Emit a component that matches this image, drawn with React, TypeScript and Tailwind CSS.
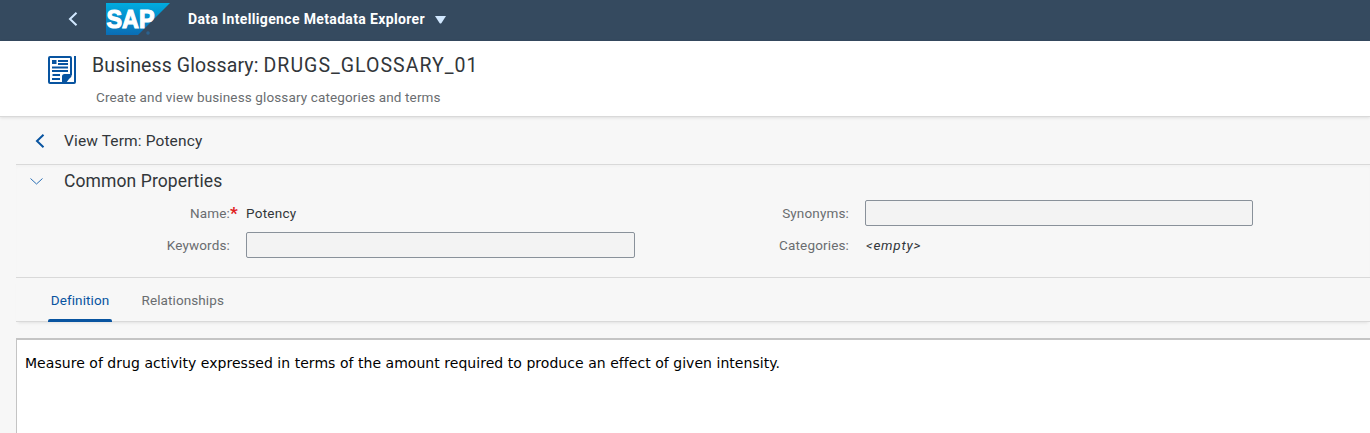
import React from "react";

function BackIcon({ className }: { className: string }) {
  return (
    <svg className={className} width="10" height="14" viewBox="0 0 10 14" fill="none" stroke="currentColor" strokeWidth="2">
      <path d="M8.5 .8 2 7l6.5 6.2" />
    </svg>
  );
}

function SapLogo() {
  return (
    <svg className="ml-[26px] shrink-0" width="64" height="32" viewBox="0 0 64 32">
      <defs>
        <linearGradient id="logo" x1="0" y1="0" x2="0" y2="1">
          <stop offset="0" stopColor="#00ace0" />
          <stop offset="1" stopColor="#0a6db5" />
        </linearGradient>
      </defs>
      <path d="M0 0h64L32 32H0z" fill="url(#logo)" />
      <text x="0.5" y="25" fontFamily="Liberation Sans, sans-serif" fontWeight="700" fontSize="26.5" textLength="48" lengthAdjust="spacingAndGlyphs" fill="#fff" stroke="#fff" strokeWidth="1.2">SAP</text>
      <circle cx="42" cy="30" r="1.8" fill="#2b628f" />
    </svg>
  );
}

function GlossaryIcon() {
  return (
    <svg className="ml-12 mt-[15px] shrink-0" width="28" height="28" viewBox="0 0 28 28" fill="none" stroke="#0854a0" strokeWidth="2">
      <path d="M23 19V2q0-1-1-1H2Q1 1 1 2v24q0 1 1 1h24q1 0 1-1V0" />
      <path d="M10 5h10M10 8h10M4 11.5h16M4 15h16M4.500 19h7.500M4 23h8" strokeWidth="1.800" />
      <path d="M4 4h4.500v4H4z" fill="#0854a0" stroke="none" />
      <path d="M14 27v-6.500q0-2.500 2.500-2.500H24q0 3-3 5l-3 4z" fill="#0854a0" stroke="none" />
    </svg>
  );
}

export default function App() {
  return (
    <div className="flex h-[433px] w-[1370px] flex-col overflow-hidden bg-[#f7f7f7] font-['Roboto',sans-serif] text-[#32363a]">
      <header className="flex h-[41px] shrink-0 items-center bg-[#354a5f] pl-[68px] pb-[3px] text-[#d1e8ff]">
        <BackIcon className="mr-[2px] shrink-0" />
        <SapLogo />
        <span className="ml-[18px] whitespace-nowrap text-[14px] font-bold tracking-[0.35px] text-white">Data Intelligence Metadata Explorer</span>
        <svg className="ml-[10px] mt-[2px]" width="11" height="8" viewBox="0 0 11 8"><path d="M0 0h11L6.5 7q-1 1-2 0z" fill="currentColor" /></svg>
      </header>

      <section className="z-10 flex h-[76px] shrink-0 border-b border-[#d9d9d9] bg-white shadow-[0_1px_3px_rgba(0,0,0,0.1)]">
        <GlossaryIcon />
        <div className="ml-4 flex flex-col whitespace-nowrap">
          <h1 className="mt-[13px] text-[19.5px] leading-6 tracking-[0.12px]">Business Glossary: <span className="tracking-[1.03px]">DRUGS_GLOSSARY_01</span></h1>
          <p className="ml-1 mt-[9px] text-[13.5px] leading-5 tracking-[0.13px] text-[#6a6d70]">Create and view business glossary categories and terms</p>
        </div>
      </section>

      <main className="flex grow flex-col pl-4">
        <div className="flex h-12 shrink-0 items-center border-b border-[#d9d9d9] pl-[19px]">
          <BackIcon className="shrink-0 text-[#0854a0]" />
          <h2 className="ml-[19px] mt-[2px] text-[15.5px] tracking-[0.13px]">View Term: Potency</h2>
        </div>

        <section className="h-[113px] shrink-0 border-b border-[#d9d9d9] shadow-[inset_0_2px_3px_rgba(0,0,0,0.02)]">
          <div className="flex h-8 items-center pl-[14px]">
            <svg width="13" height="8" viewBox="0 0 13 8" fill="none" stroke="#2a6fb5"><path d="m.5 1.5 6 5.5 6-5.5" /></svg>
            <h3 className="ml-[21px] text-[17.5px] tracking-[0.1px]">Common Properties</h3>
          </div>
          <div className="flex text-[13.5px] leading-5 tracking-[0.15px]">
            <div className="grid w-[619px] grid-cols-[214px_389px] auto-rows-[32px] items-center gap-x-4">
              <label className="-mr-[8px] flex justify-end text-[#6a6d70]">Name:<span className="w-[8px] text-[17px] font-bold text-[#e02020]">*</span></label>
              <span className="tracking-[0.25px]">Potency</span>
              <label className="text-right text-[#6a6d70]">Keywords:</label>
              <div className="h-[26px] rounded-[2px] border border-[#89919a] bg-[#f3f3f3]" />
            </div>
            <div className="grid grid-cols-[214px_388px] auto-rows-[32px] items-center gap-x-4">
              <label className="text-right text-[#6a6d70]">Synonyms:</label>
              <div className="h-[26px] rounded-[2px] border border-[#89919a] bg-[#f3f3f3]" />
              <label className="text-right text-[#6a6d70]">Categories:</label>
              <span className="pl-px italic tracking-[0.75px]">&lt;empty&gt;</span>
            </div>
          </div>
        </section>

        <nav className="flex h-11 shrink-0 border-b border-[#d9d9d9] pl-8 text-[13.5px] tracking-[0.1px] shadow-[0_3px_3px_-2px_rgba(0,0,0,0.09)]">
          <div className="flex h-11 w-16 flex-col justify-between text-[#0854a0]">
            <span className="pt-[12px] text-center leading-5 tracking-[0.1px]">Definition</span>
            <span className="h-[3px] rounded-t-[2px] bg-[#0854a0]" />
          </div>
          <span className="ml-[29.5px] pt-[12px] leading-5 text-[#6a6d70]">Relationships</span>
        </nav>

        <article className="mt-4 grow border-l border-t-2 border-[#c4c4c4] bg-white pl-2 pt-[13px] font-['DejaVu_Sans',sans-serif] text-[14px] leading-5 tracking-[0.04px] text-black">
          <p className="whitespace-nowrap">Measure of drug activity expressed in terms of the amount required to produce an effect of given intensity.</p>
        </article>
      </main>
    </div>
  );
}
